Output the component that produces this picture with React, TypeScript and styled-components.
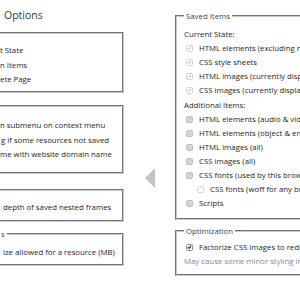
import React from 'react';
import styled, { createGlobalStyle } from 'styled-components';

const GlobalStyle = createGlobalStyle`
  html, body {
    margin: 0;
    padding: 0;
    background: #fff;
    overflow: hidden;
  }
  body {
    font-family: "Open Sans", "Noto Sans", sans-serif;
    color: #262626;
  }
`;

const Page = styled.div`
  display: flex;
  align-items: flex-start;
  width: 620px;
  height: 300px;
`;

const LeftColumn = styled.div`
  display: flex;
  flex-direction: column;
  width: 136px;
  margin-left: -12px;
  flex: none;
`;

const Title = styled.h1`
  margin: 8px 0 0;
  padding-left: 16px;
  font-size: 10.5px;
  line-height: 14px;
  font-weight: 400;
  color: #3a3a3a;
`;

const Panel = styled.fieldset<{ $top: number; $pt: number; $pb: number }>`
  margin: ${(p) => p.$top}px 0 0;
  padding: ${(p) => p.$pt}px 0 ${(p) => p.$pb}px 10px;
  border: 2px groove rgb(200, 200, 200);
  min-width: 0;
  box-sizing: border-box;
  width: 100%;
`;

const PanelLegend = styled.legend`
  padding: 0 2px;
  margin-left: -1px;
  font-size: 7.8px;
  line-height: 14px;
  color: #444;
`;

const LeftRow = styled.div<{ $inset?: number }>`
  height: 14.5px;
  line-height: 14.5px;
  font-size: 7.8px;
  white-space: nowrap;
  overflow: hidden;
  padding-left: ${(p) => p.$inset ?? 0}px;
`;

const ArrowSlot = styled.div`
  width: 51px;
  flex: none;
  padding: 168px 0 0 21px;
  box-sizing: border-box;
`;

const RightColumn = styled.div`
  display: flex;
  flex-direction: column;
  width: 300px;
  flex: none;
  margin-top: 9px;
`;

const Group = styled.fieldset<{ $top: number; $pt: number; $pb: number }>`
  margin: ${(p) => p.$top}px 0 0;
  padding: ${(p) => p.$pt}px 0 ${(p) => p.$pb}px 7px;
  border: 2px groove rgb(200, 200, 200);
  min-width: 0;
`;

const GroupLegend = styled.legend`
  padding: 0 2px;
  font-size: 7.8px;
  line-height: 14px;
  color: #444;
`;

const SectionLabel = styled.div<{ $gap?: number }>`
  height: 14px;
  line-height: 14px;
  font-size: 7.8px;
  margin-top: ${(p) => p.$gap ?? 0}px;
  white-space: nowrap;
`;

const Row = styled.label<{ $indent?: number }>`
  display: flex;
  align-items: center;
  gap: 6px;
  height: 14px;
  font-size: 7.8px;
  white-space: nowrap;
  padding-left: ${(p) => 2 + (p.$indent ?? 0)}px;
`;

const Note = styled.div`
  height: 14px;
  line-height: 14px;
  font-size: 7.8px;
  color: #7d8a99;
  white-space: nowrap;
`;

type BoxKind = 'fixed' | 'off' | 'idle' | 'on';

const Box = styled.span<{ $kind: BoxKind }>`
  display: inline-flex;
  align-items: center;
  justify-content: center;
  flex: none;
  width: 7px;
  height: 7px;
  border-radius: 1.5px;
  box-sizing: border-box;
  border: 1px solid
    ${(p) =>
      p.$kind === 'off' ? '#bdbdbd' : p.$kind === 'on' ? '#8a8a8a' : '#d6d6d6'};
  background: ${(p) => (p.$kind === 'off' ? '#d4d4d4' : '#fff')};
  svg {
    display: block;
  }
`;

const Check = ({ kind }: { kind: BoxKind }) => (
  <Box $kind={kind}>
    {(kind === 'fixed' || kind === 'on') && (
      <svg width="6" height="6" viewBox="0 0 6 6">
        <polyline
          points="1,3.2 2.4,4.6 5,1.3"
          fill="none"
          stroke={kind === 'on' ? '#222' : '#a8a8a8'}
          strokeWidth={kind === 'on' ? 1.4 : 1}
        />
      </svg>
    )}
  </Box>
);

const Item = ({ kind, text, indent }: { kind: BoxKind; text: string; indent?: number }) => (
  <Row $indent={indent}>
    <Check kind={kind} />
    <span>{text}</span>
  </Row>
);

export default function App() {
  return (
    <>
      <GlobalStyle />
      <Page>
        <LeftColumn>
          <Title>Options</Title>
          <Panel $top={10} $pt={9} $pb={4}>
            <LeftRow>t State</LeftRow>
            <LeftRow>n Items</LeftRow>
            <LeftRow>ete Page</LeftRow>
          </Panel>
          <Panel $top={12} $pt={11.5} $pb={10}>
            <LeftRow>n submenu on context menu</LeftRow>
            <LeftRow $inset={1}>g if some resources not saved</LeftRow>
            <LeftRow>me with website domain name</LeftRow>
          </Panel>
          <Panel $top={15} $pt={9.5} $pb={5}>
            <LeftRow $inset={3}>depth of saved nested frames</LeftRow>
          </Panel>
          <Panel $top={5} $pt={4} $pb={5}>
            <PanelLegend>s</PanelLegend>
            <LeftRow $inset={3}>ize allowed for a resource (MB)</LeftRow>
          </Panel>
        </LeftColumn>

        <ArrowSlot>
          <svg width="10" height="20" viewBox="0 0 10 20">
            <polygon points="0,10 10,0 10,20" fill="#c3c3c3" />
          </svg>
        </ArrowSlot>

        <RightColumn>
          <Group $top={0} $pt={4} $pb={8}>
            <GroupLegend>Saved Items</GroupLegend>
            <SectionLabel>Current State:</SectionLabel>
            <Item kind="fixed" text="HTML elements (excluding media)" />
            <Item kind="fixed" text="CSS style sheets" />
            <Item kind="fixed" text="HTML images (currently displayed)" />
            <Item kind="fixed" text="CSS images (currently displayed)" />
            <SectionLabel $gap={1}>Additional Items:</SectionLabel>
            <Item kind="off" text="HTML elements (audio & video)" />
            <Item kind="off" text="HTML elements (object & embed)" />
            <Item kind="off" text="HTML images (all)" />
            <Item kind="off" text="CSS images (all)" />
            <Item kind="off" text="CSS fonts (used by this browser)" />
            <Item kind="idle" text="CSS fonts (woff for any browser)" indent={11} />
            <Item kind="off" text="Scripts" />
          </Group>
          <Group $top={4} $pt={2} $pb={6}>
            <GroupLegend>Optimization</GroupLegend>
            <Item kind="on" text="Factorize CSS images to reduce file size" />
            <Note>May cause some minor styling inconsistencies</Note>
          </Group>
        </RightColumn>
      </Page>
    </>
  );
}
